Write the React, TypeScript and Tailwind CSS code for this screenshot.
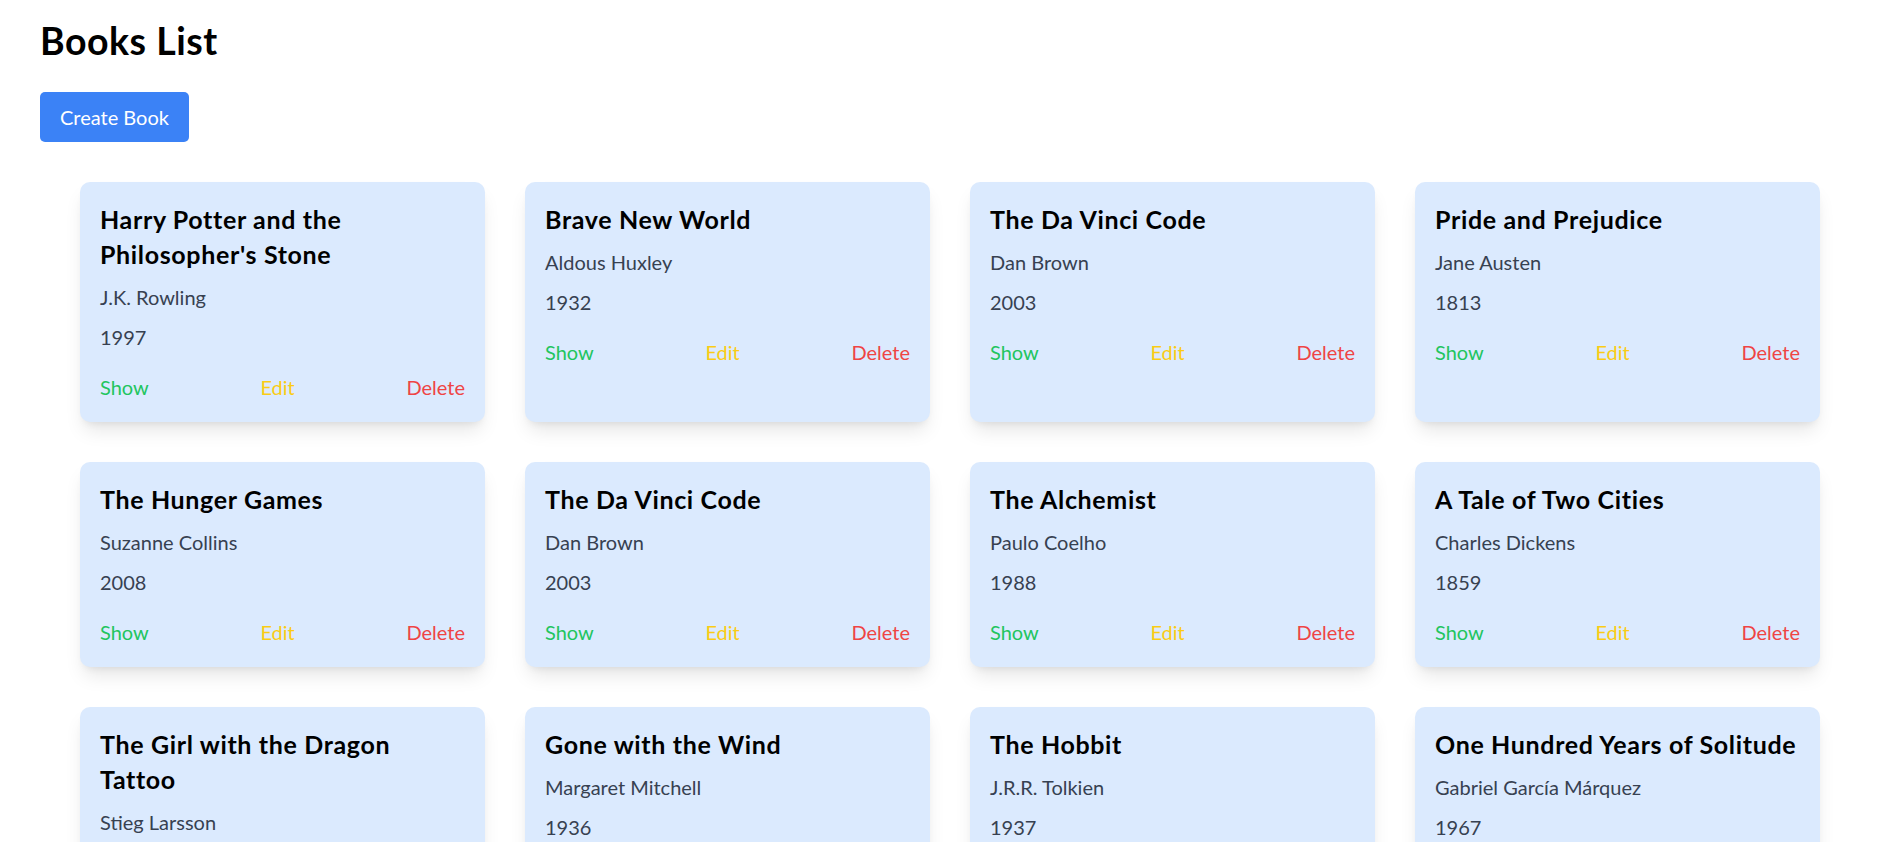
import React from 'react';

type Book = {
  id: number;
  title: string;
  author: string;
  year: number;
};

const books: Book[] = [
  { id: 1, title: "Harry Potter and the Philosopher's Stone", author: 'J.K. Rowling', year: 1997 },
  { id: 2, title: 'Brave New World', author: 'Aldous Huxley', year: 1932 },
  { id: 3, title: 'The Da Vinci Code', author: 'Dan Brown', year: 2003 },
  { id: 4, title: 'Pride and Prejudice', author: 'Jane Austen', year: 1813 },
  { id: 5, title: 'The Hunger Games', author: 'Suzanne Collins', year: 2008 },
  { id: 6, title: 'The Da Vinci Code', author: 'Dan Brown', year: 2003 },
  { id: 7, title: 'The Alchemist', author: 'Paulo Coelho', year: 1988 },
  { id: 8, title: 'A Tale of Two Cities', author: 'Charles Dickens', year: 1859 },
  { id: 9, title: 'The Girl with the Dragon Tattoo', author: 'Stieg Larsson', year: 2005 },
  { id: 10, title: 'Gone with the Wind', author: 'Margaret Mitchell', year: 1936 },
  { id: 11, title: 'The Hobbit', author: 'J.R.R. Tolkien', year: 1937 },
  { id: 12, title: 'One Hundred Years of Solitude', author: 'Gabriel García Márquez', year: 1967 },
];

const BookCard = ({ book }: { book: Book }) => (
  <div className="bg-[#dbeafe] rounded-[10px] p-[20px] shadow-[0_12px_19px_-4px_rgba(0,0,0,0.1),0_5px_8px_-5px_rgba(0,0,0,0.1)]">
    <h2 className="text-[25px] leading-[35px] font-bold tracking-[0.65px] text-black mb-[10px]">{book.title}</h2>
    <p className="text-[20px] leading-[30px] text-[#374151] mb-[10px]">{book.author}</p>
    <p className="text-[20px] leading-[30px] text-[#374151]">{book.year}</p>
    <div className="flex justify-between mt-[20px] text-[20px] leading-[30px]">
      <a href="#" className="text-[#22c55e]">Show</a>
      <a href="#" className="text-[#facc15]">Edit</a>
      <a href="#" className="text-[#ef4444]">Delete</a>
    </div>
  </div>
);

const BooksList = () => {
  return (
    <div className="min-h-screen bg-white px-[40px] pt-[18px] pb-[40px] font-['Lato','Noto_Sans',sans-serif]">
      <h1 className="text-[37.5px] leading-[45px] font-bold tracking-[0.5px] text-black mb-[29px]">Books List</h1>
      <button
        type="button"
        className="bg-[#3b82f6] text-white text-[20px] leading-[30px] px-[20px] py-[10px] rounded-[5px]"
      >
        Create Book
      </button>

      {/* grid of books */}
      <div className="grid grid-cols-[repeat(4,405px)] gap-[40px] mt-[40px] ml-[40px]">
        {books.map((book) => (
          <BookCard key={book.id} book={book} />
        ))}
      </div>
    </div>
  );
};

export default BooksList;
